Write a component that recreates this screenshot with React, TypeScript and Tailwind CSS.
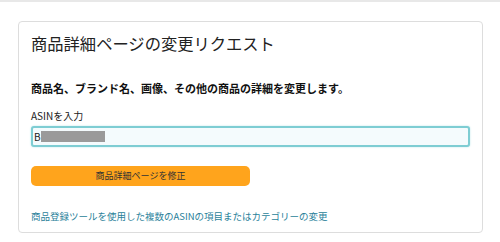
export default function App() {
  return (
    <div
      className="w-[500px] h-[242px] bg-white border-t-2 border-[#e8e8e8] overflow-hidden"
      style={{ fontFamily: '"Noto Sans CJK JP", "Noto Sans", sans-serif' }}
    >
      <div className="ml-[18px] mt-[19px] w-[465px] h-[212px] border border-[#dddddd] rounded-[4px] pt-[9px] px-[12px] flex flex-col">
        <div className="h-[24px] text-[16.3px] leading-[24px] text-[#222222] whitespace-nowrap">
          商品詳細ページの変更リクエスト
        </div>
        <div className="mt-[25px] h-[16px] text-[11px] leading-[16px] font-bold text-[#111111] whitespace-nowrap">
          商品名、ブランド名、画像、その他の商品の詳細を変更します。
        </div>
        <div className="mt-[13px] h-[14px] text-[10px] leading-[14px] text-[#222222] whitespace-nowrap">
          ASINを入力
        </div>
        <div className="mt-[3px] w-[439px] h-[21px] border-2 border-[#7ecdd3] rounded-[3px] bg-[#f4fbfd] flex items-center pl-[1px] shadow-[0_0_2px_#b6e3e7]">
          <span className="text-[10px] leading-[14px] text-[#222222]">B</span>
          <span className="ml-[0px] w-[64px] h-[11px] bg-[#9a9a9a]"></span>
        </div>
        <div className="mt-[19px] w-[219px] h-[20px] rounded-[5px] bg-[#ffa41c] flex items-center justify-center text-[9px] leading-[12px] text-[#333333]">
          商品詳細ページを修正
        </div>
        <div className="mt-[23px] h-[14px] text-[9.5px] leading-[14px] text-[#2a7f9a] whitespace-nowrap">
          商品登録ツールを使用した複数のASINの項目またはカテゴリーの変更
        </div>
      </div>
    </div>
  );
}
